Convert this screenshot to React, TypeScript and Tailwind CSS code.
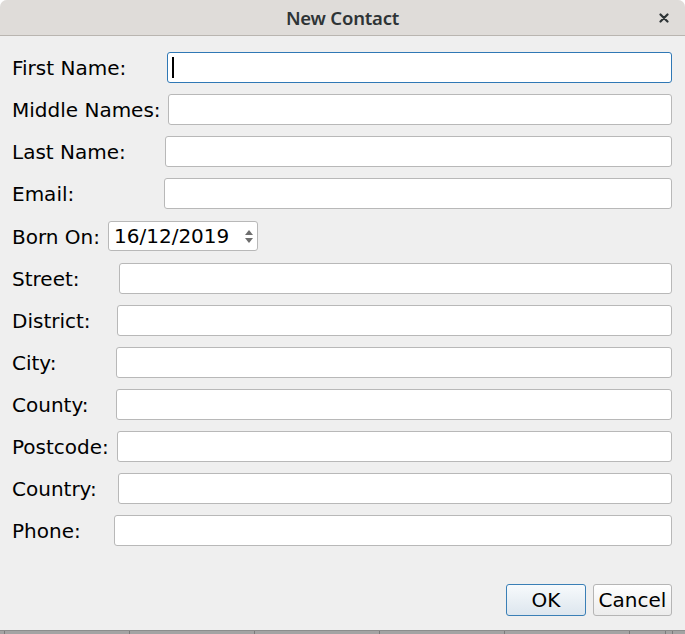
import React from "react";

interface FieldRow {
  label: string;
  labelClass: string;
}

const fields: FieldRow[] = [
  { label: "Street:", labelClass: "w-[107px]" },
  { label: "District:", labelClass: "w-[105px]" },
  { label: "City:", labelClass: "w-[104px]" },
  { label: "County:", labelClass: "w-[104px]" },
  { label: "Postcode:", labelClass: "w-[105px]" },
  { label: "Country:", labelClass: "w-[106px]" },
  { label: "Phone:", labelClass: "w-[102px]" },
];

const topFields: FieldRow[] = [
  { label: "First Name:", labelClass: "w-[155px]" },
  { label: "Middle Names:", labelClass: "w-[156px]" },
  { label: "Last Name:", labelClass: "w-[153px]" },
  { label: "Email:", labelClass: "w-[152px]" },
];

const TextBox = ({ focused }: { focused?: boolean }) => (
  <div
    className={`flex-1 h-[31px] rounded-[3px] bg-white flex items-center ${
      focused ? "border border-[#2f78b5]" : "border border-[#b8b8b8]"
    }`}
  >
    {focused && <div className="ml-[4px] w-[1.5px] h-[21px] bg-black" />}
  </div>
);

const Row = ({ row, focused }: { row: FieldRow; focused?: boolean }) => (
  <div className="flex items-center h-[31px]">
    <div className={`${row.labelClass} shrink-0 text-[20px] text-black leading-none`}>
      {row.label}
    </div>
    <TextBox focused={focused} />
  </div>
);

const App = () => {
  return (
    <div
      className="w-[685px] h-[634px] bg-white flex flex-col overflow-hidden"
      style={{ fontFamily: '"DejaVu Sans", sans-serif' }}
    >
      <div className="flex-1 flex flex-col bg-[#efefef] rounded-t-[7px] overflow-hidden">
        {/* Title bar */}
        <div className="h-[36px] shrink-0 bg-[#dfdcd9] border-b border-[#b9b5b0] flex items-center relative">
          <div
            className="flex-1 text-center text-[18.5px] font-semibold text-[#2e3436] tracking-[-0.2px]"
            style={{ fontFamily: '"Noto Sans", "Open Sans", sans-serif' }}
          >
            New Contact
          </div>
          <svg
            className="absolute right-[16px] top-[13px]"
            width="10"
            height="10"
            viewBox="0 0 10 10"
          >
            <path d="M1.5 1.5 L8.5 8.5 M8.5 1.5 L1.5 8.5" stroke="#2e3436" strokeWidth="2.2" strokeLinecap="round" />
          </svg>
        </div>

        {/* Form */}
        <div className="flex flex-col gap-[11px] pl-[12px] pr-[13px] pt-[16px]">
          {topFields.map((f, i) => (
            <Row key={f.label} row={f} focused={i === 0} />
          ))}
          <div className="flex items-center h-[31px] mt-[1px]">
            <div className="w-[96px] shrink-0 text-[20px] text-black leading-none">Born On:</div>
            <div className="w-[150px] h-[30px] rounded-[3px] bg-white border border-[#b8b8b8] flex items-center self-start">
              <span className="pl-[5px] text-[20px] text-black leading-none flex-1">16/12/2019</span>
              <div className="w-[17px] h-full flex flex-col items-center justify-center gap-[3px]">
                <svg width="8" height="5" viewBox="0 0 8 5">
                  <path d="M0 5 L4 0 L8 5 Z" fill="#6e6e6e" />
                </svg>
                <svg width="8" height="5" viewBox="0 0 8 5">
                  <path d="M0 0 L4 5 L8 0 Z" fill="#6e6e6e" />
                </svg>
              </div>
            </div>
          </div>
          {fields.map((f) => (
            <Row key={f.label} row={f} />
          ))}
        </div>

        <div className="flex-1" />

        {/* Buttons */}
        <div className="flex justify-end gap-[7px] pr-[13px] pb-[14px]">
          <button className="w-[80px] h-[32px] rounded-[3px] border border-[#3a7fb6] bg-gradient-to-b from-[#f7fafc] to-[#dde6ee] text-[20px] text-black leading-none">
            OK
          </button>
          <button className="w-[79px] h-[32px] rounded-[3px] border border-[#b5b5b5] bg-gradient-to-b from-[#ffffff] to-[#ececec] text-[20px] text-black leading-none">
            Cancel
          </button>
        </div>

        {/* Bottom strip */}
        <div className="h-[4px] shrink-0 bg-[#a3a3a3] border-t border-[#8c8c8c] flex">
          <div className="w-[5px] border-r border-[#7a7a7a]" />
          <div className="w-[125px] border-r border-[#7a7a7a]" />
          <div className="w-[125px] border-r border-[#7a7a7a]" />
          <div className="w-[125px] border-r border-[#7a7a7a]" />
          <div className="w-[125px] border-r border-[#7a7a7a]" />
          <div className="w-[125px] border-r border-[#7a7a7a]" />
          <div className="w-[36px] border-r border-[#7a7a7a]" />
          <div className="w-[7px] border-r border-[#7a7a7a]" />
        </div>
      </div>
    </div>
  );
};

export default App;
